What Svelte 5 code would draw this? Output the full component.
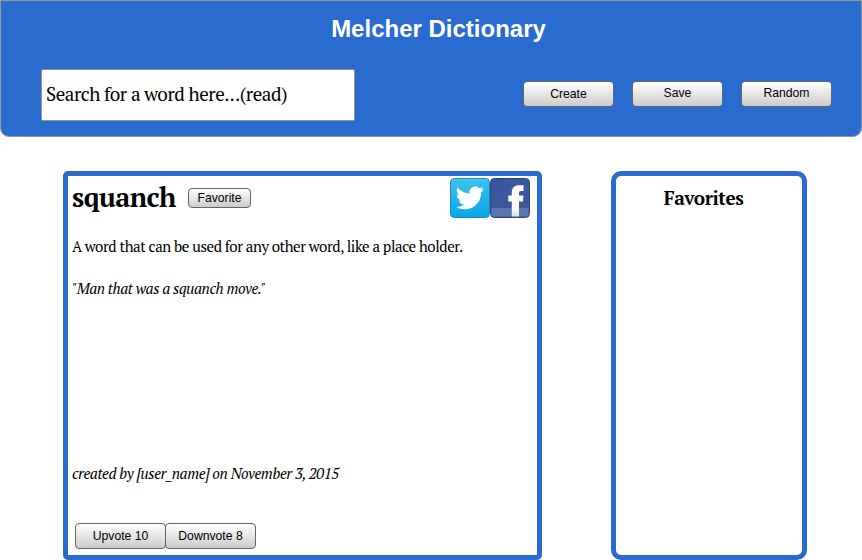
<script>
  const actions = ['Create', 'Save', 'Random'];
</script>

<div class="page">
  <header>
    <h1>Melcher Dictionary</h1>
    <div class="toolbar">
      <div class="search">Search for a word here...(read)</div>
      <nav>
        {#each actions as action}
          <button class="wide" class:raised={action !== 'Create'}>{action}</button>
        {/each}
      </nav>
    </div>
  </header>

  <main>
    <article>
      <div class="entry-head">
        <h2>squanch</h2>
        <button class="small">Favorite</button>
        <div class="share">
          <svg width="40" height="40" viewBox="0 0 40 40" aria-label="Twitter">
            <defs>
              <linearGradient id="tw" x1="0" y1="0" x2="0" y2="1">
                <stop offset="0" stop-color="#3fc0ed" />
                <stop offset="1" stop-color="#08a6ea" />
              </linearGradient>
            </defs>
            <rect x=".5" y=".5" width="39" height="39" rx="4" fill="url(#tw)" stroke="#168dbf" />
            <path d="M3 1.500H37" stroke="#5acbf1" stroke-width="1" opacity=".6" />
            <g transform="translate(5.7 5.800) scale(1.180)">
              <path fill="#fff" d="M23.95 4.57a10 10 0 0 1-2.82.77 4.96 4.96 0 0 0 2.16-2.72c-.95.55-2 .95-3.13 1.18a4.92 4.92 0 0 0-8.38 4.48C7.69 8.1 4.07 6.13 1.64 3.16a4.93 4.93 0 0 0 1.52 6.57 4.9 4.9 0 0 1-2.23-.61v.06a4.92 4.92 0 0 0 3.95 4.83 5 5 0 0 1-2.21.08 4.94 4.94 0 0 0 4.6 3.42A9.87 9.87 0 0 1 0 19.54a13.99 13.99 0 0 0 7.55 2.21c9.05 0 14-7.5 14-13.98 0-.21 0-.42-.02-.63a9.9 9.9 0 0 0 2.42-2.57z" />
            </g>
          </svg>
          <svg width="40" height="40" viewBox="0 0 40 40" aria-label="Facebook">
            <defs>
              <linearGradient id="fb" x1="0" y1="0" x2="0" y2="1">
                <stop offset="0" stop-color="#3a559f" />
                <stop offset="1" stop-color="#3d5a98" />
              </linearGradient>
              <linearGradient id="ff" x1="0" y1="0" x2="0" y2="1">
                <stop offset="0" stop-color="#fff" />
                <stop offset=".7" stop-color="#fff" />
                <stop offset="1" stop-color="#dcdfe9" />
              </linearGradient>
            </defs>
            <rect x=".5" y=".5" width="39" height="39" rx="4" fill="url(#fb)" stroke="#30467f" />
            <path d="M1.5 30H38.5V36a2.5 2.5 0 0 1-2.5 2.5H4A2.5 2.5 0 0 1 1.500 36Z" fill="#5a74ad" />
            <path d="M21.800 38.500V23.500H18.300V17.500h3.500V14.500C21.800 9.500 24.500 7.300 29 7.300H33.500V13H31c-1.500 0-2 .7-2 2.200V17.500h4.500l-.6 6H29v15Z" fill="url(#ff)" />
          </svg>
        </div>
      </div>
      <p class="definition">A word that can be used for any other word, like a place holder.</p>
      <p class="quote">"Man that was a squanch move."</p>
      <p class="author">created by [user_name] on November 3, 2015</p>
      <div class="votes">
        <button class="wide">Upvote 10</button>
        <button class="wide">Downvote 8</button>
      </div>
    </article>

    <aside>
      <h3>Favorites</h3>
    </aside>
  </main>
</div>

<style>
  :global(body) {
    background: #fff;
  }
  * {
    box-sizing: border-box;
  }
  .page {
    width: 862px;
    height: 560px;
    overflow: hidden;
    color: #000;
    font-family: 'PT Serif', 'Liberation Serif', serif;
    font-variant-numeric: lining-nums;
  }
  h1, h2, h3, p {
    margin: 0;
    white-space: nowrap;
  }
  header {
    height: 137px;
    padding: 14px 29px 0 40px;
    background: #296bce;
    border: 1px solid #969696;
    border-radius: 0 0 9px 9px;
  }
  h1 {
    padding-left: 4px;
    text-align: center;
    color: #fff;
    font: bold 24px/28px 'Liberation Sans', sans-serif;
  }
  .toolbar {
    display: flex;
    justify-content: space-between;
    margin-top: 26px;
  }
  .search {
    width: 314px;
    height: 52px;
    padding-left: 4px;
    background: #fff;
    border: 1px solid #969696;
    border-radius: 2px;
    font-size: 19px;
    letter-spacing: -0.45px;
    line-height: 48px;
    white-space: nowrap;
  }
  nav {
    display: flex;
    gap: 18px;
    padding-top: 12px;
  }
  button {
    margin: 0;
    padding: 0;
    border: 1px solid #656565;
    border-radius: 4px;
    background: linear-gradient(#fff, #cbcbcb);
    color: #000;
    font: 12.2px/16px 'Liberation Sans', sans-serif;
  }
  .wide {
    width: 91px;
    height: 26px;
  }
  .wide.raised {
    padding-bottom: 2px;
  }
  .small {
    width: 63px;
    height: 20px;
    margin: 11px 0 0 13px;
  }
  main {
    display: flex;
    gap: 69px;
    margin: 34px 0 0 63px;
  }
  article {
    width: 479px;
    height: 389px;
    padding: 1px 7px 0 4px;
    border: 5px solid #296bce;
    border-radius: 5px;
  }
  .entry-head {
    display: flex;
    align-items: flex-start;
    height: 42px;
  }
  h2 {
    width: 103px;
    font-size: 27px;
    letter-spacing: -0.55px;
    line-height: 40px;
  }
  .share {
    display: flex;
    margin: 1px 0 0 auto;
  }
  .definition, .quote, .author {
    font-size: 15px;
    letter-spacing: -0.41px;
    line-height: 20px;
  }
  .definition {
    margin-top: 17px;
  }
  .quote, .author {
    font-style: italic;
  }
  .quote {
    margin-top: 22px;
  }
  .author {
    margin-top: 165px;
  }
  .votes {
    display: flex;
    margin: 40px 0 0 3px;
  }
  .votes button + button {
    margin-left: -1px;
  }
  aside {
    width: 196px;
    height: 389px;
    padding-top: 10px;
    border: 5px solid #296bce;
    border-radius: 10px;
  }
  h3 {
    padding-right: 11px;
    font-size: 19px;
    letter-spacing: -0.45px;
    line-height: 24px;
    text-align: center;
  }
</style>
